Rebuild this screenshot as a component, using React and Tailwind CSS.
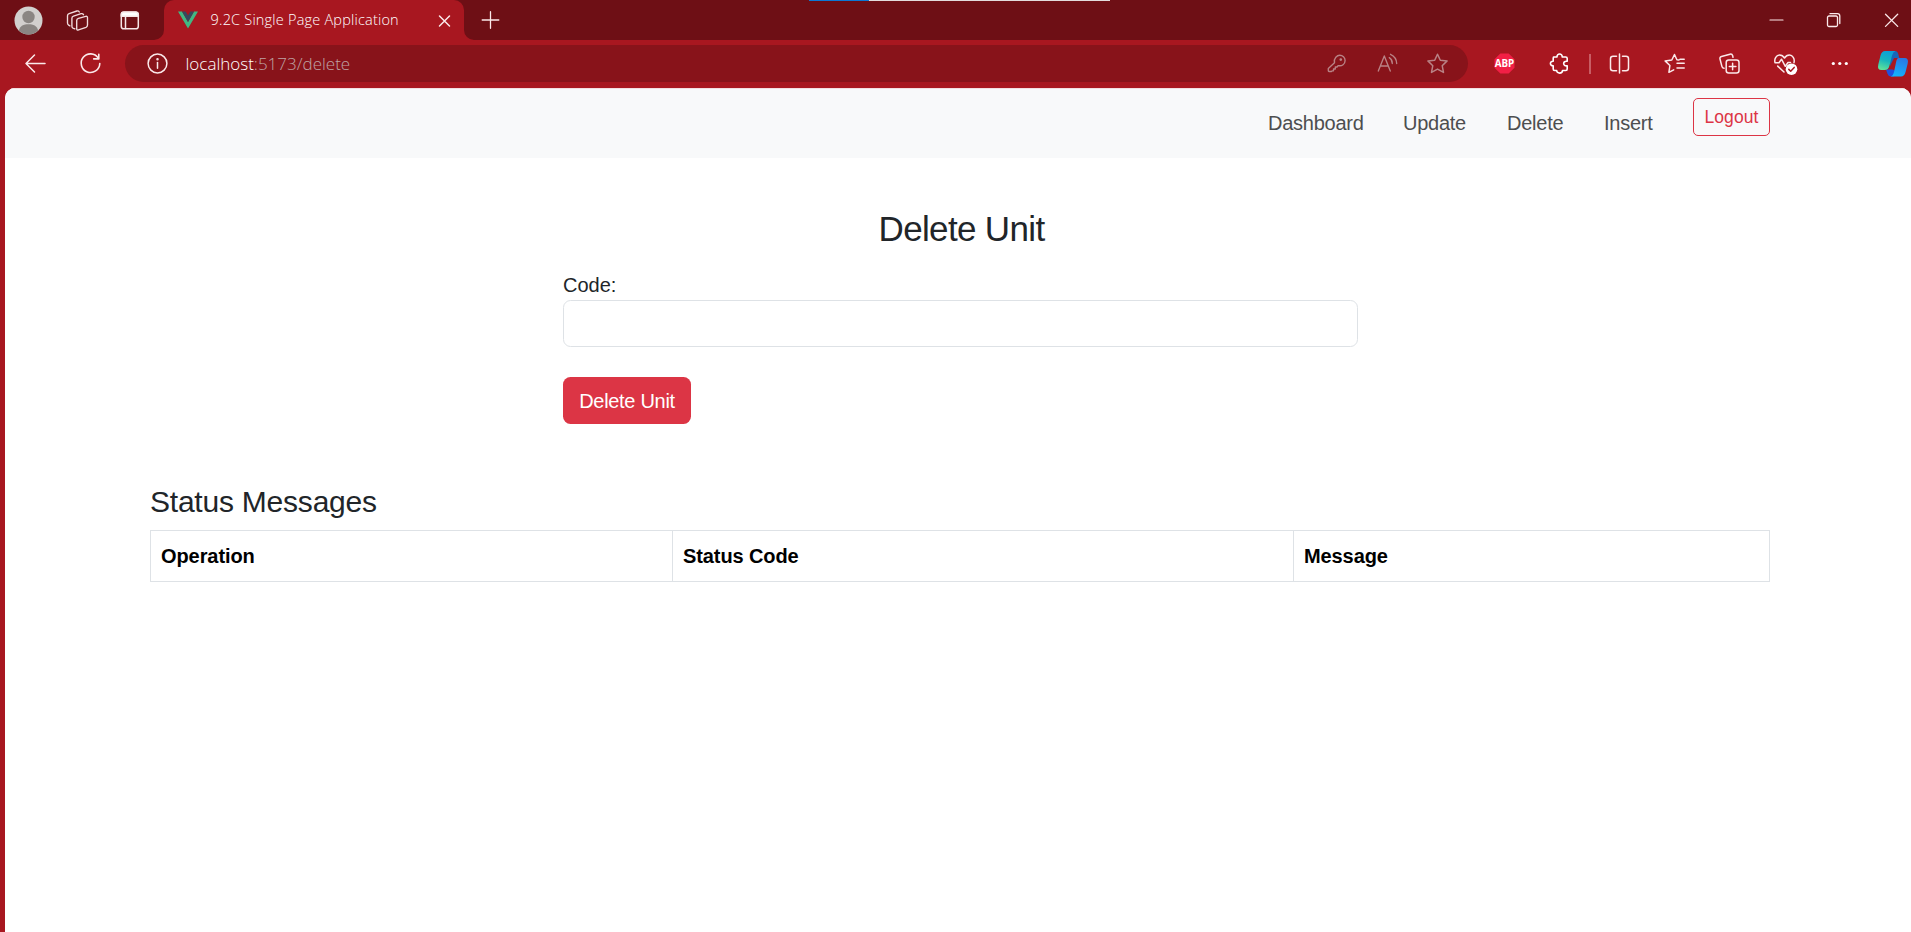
import React from "react";

// Icon canvas whose origin is its centre; one unit is one pixel.
function Icon({ children, className = "", color = "#fbe9ea", sw = 1.35 }) {
  return (
    <svg
      className={"h-[31px] w-[31px] shrink-0 " + className}
      viewBox="-15.5 -15.5 31 31"
      fill="none"
      stroke={color}
      strokeWidth={sw}
      strokeLinecap="round"
      strokeLinejoin="round"
    >
      {children}
    </svg>
  );
}

const star =
  "M0-9.3 2.8-3.3 9.6-2.6 4.7 2.2 6 8.9 0 5.6-6 8.9-4.7 2.2-9.6-2.6-2.8-3.3Z";

function TabStrip() {
  return (
    <div className="relative flex h-10 items-center bg-[#6e0f15]">
      <div className="absolute left-[809px] top-0 flex h-px w-[301px] bg-[#e3dcdc]">
        <div className="h-px w-[60px] bg-[#0c78d4]" />
      </div>
      <Icon className="ml-[12.5px]" color="none">
        <circle r="14" fill="#d2d0ce" />
        <circle cy="-3.5" r="6.2" fill="#8a8683" />
        <path d="M-9.7 10.1C-8.5 5.3-4.8 3.8 0 3.8S8.5 5.3 9.7 10.1A14 14 0 0 1-9.7 10.1Z" fill="#8a8683" />
      </Icon>
      <Icon className="ml-[18.5px]" color="#f2dcdd">
        <path d="M1-2.2Q-.8-1.6-.8 0V8.2Q-.8 10 1 9.4L8.5 6.8Q10 6.200 10 4.600V-2.800Q10-4.600 8.200-4.200Z" />
        <path d="M-2.600 8.300-4.600 7.600Q-5.600 7.200-5.600 5.800V-2.200Q-5.600-3.800-4-4.300L3.600-6.800Q5.200-7.200 6-5.800" />
        <path d="M-7.600 5.400-8.800 4.700Q-10 4-10 2.600V-4.800Q-10-6.400-8.400-6.900L-.6-9.500Q1-9.900 1.800-8.500" />
      </Icon>
      <Icon className="ml-[21px]" color="#f7e6e7" sw={1.5}>
        <rect x="-8.200" y="-8.200" width="17" height="16.500" rx="2.600" />
        <path d="M-8.200-4.200V-6A2.600 2.600 0 0 1-5.600-8.600H6.200A2.600 2.600 0 0 1 8.800-6V-4.200Z" fill="#fff" />
        <path d="M-4-4V8" />
      </Icon>
      <div className="relative ml-[18.500px] flex h-10 w-[300px] items-center rounded-t-[10px] bg-[#a81720]">
        <svg className="absolute -left-[10px] bottom-0 h-[10px] w-[10px]" viewBox="0 0 10 10">
          <path d="M10 0A10 10 0 0 1 0 10H10Z" fill="#a81720" />
        </svg>
        <svg className="absolute -right-[10px] bottom-0 h-[10px] w-[10px]" viewBox="0 0 10 10">
          <path d="M0 0A10 10 0 0 0 10 10H0Z" fill="#a81720" />
        </svg>
        <svg className="ml-[14px] h-[18px] w-[20px] shrink-0" viewBox="0 0 20 18">
          <path d="M0 .5H4L10 11 16 .5H20L10 17.500Z" fill="#41b883" />
          <path d="M4 .5H7.700L10 4.500 12.300 .5H16L10 11Z" fill="#35495e" />
        </svg>
        <span className="ml-[13px] w-[189px] whitespace-nowrap font-['Open_Sans',sans-serif] text-[14.500px] font-light leading-5 tracking-[0.200px] text-white">
          9.2C Single Page Application
        </span>
        <Icon className="ml-[29.500px] translate-y-[0.500px]" sw={1.5}>
          <path d="M-5-5 5 5M5-5-5 5" />
        </Icon>
      </div>
      <Icon className="ml-[11px] -translate-y-[0.500px]" sw={1.300}>
        <path d="M-8.300 0H8.300M0-8.300V8.300" />
      </Icon>
      <div className="ml-auto flex items-center">
        <Icon className="-translate-y-[0.500px]" sw={1.200}>
          <path d="M-6.500 0H6.500" />
        </Icon>
        <Icon className="ml-[26px]" sw={1.300}>
          <rect x="-6" y="-4.500" width="10" height="10.500" rx="1.500" />
          <path d="M-3.500-6.800H4Q6.300-6.800 6.300-4.500V3" />
        </Icon>
        <Icon className="ml-[27px] mr-[4.500px]" sw={1.300}>
          <path d="M-6-6.300 6.200 5.900M6.200-6.300-6 5.900" />
        </Icon>
      </div>
    </div>
  );
}

function Toolbar() {
  return (
    <div className="flex h-12 items-start bg-[#a81720] pt-[5px]">
      <div className="flex h-[37px] items-center">
        <Icon className="ml-[19.500px]" sw={1.500}>
          <path d="M-1-8.500-9.500 0-1 8.500M-9.500 0H9.500" />
        </Icon>
        <Icon className="ml-[24px]" sw={1.600}>
          <path d="M7.800-5.400A9.300 9.300 0 1 0 9.300 0M8.300-9.300V-4.600H3.200" />
        </Icon>
      </div>
      <div className="ml-[19px] flex h-[37px] w-[1343px] shrink-0 items-center rounded-full bg-[#88131a]">
        <Icon className="ml-[17px]" sw={1.500}>
          <circle r="9.400" />
          <path d="M0-1V4.800" />
          <circle cy="-4.200" r=".5" fill="#fff" />
        </Icon>
        <span className="ml-[13px] whitespace-nowrap font-['Open_Sans',sans-serif] text-[17px] font-light leading-6 text-[#bfa3a5]">
          <span className="text-white">localhost</span>:5173/delete
        </span>
        <div className="ml-auto mr-[15px] flex items-center gap-[19.500px]">
          <Icon color="#b98285">
            <path d="M-8.200 5-2-.8C-3-5.500 .8-8.300 3.200-8.300 6.200-8.300 8.600-6 8.600-3 8.600 .5 5.500 3 1.600 2.100L.5 3.500H-1.200V5.500H-3V7.300H-4.200L-5 8H-7.500Q-8.200 8-8.200 7.300Z" />
            <circle cx="4.300" cy="-4" r=".7" fill="#b98285" />
          </Icon>
          <Icon color="#b98285" className="translate-x-px">
            <path d="M-9.200 7.500-3.200-7.500 2.800 7.500M-7.200 2.500H.8" />
            <path d="M1.800-5.800Q4.800-4 4.800 0M3-9.200Q9-6.500 9.200 0" />
          </Icon>
          <Icon color="#b98285" sw={1.500}>
            <path d={star} />
          </Icon>
        </div>
      </div>
      <div className="ml-[9px] flex h-[37px] items-center">
        <div className="flex w-[55px] justify-center">
          <Icon color="none">
            <path d="M-4.200-10H4.200L10-4.200V4.200L4.200 10H-4.200L-10 4.200V-4.200Z" fill="#f21f45" />
            <text y="3.600" textAnchor="middle" fontSize="9.800" fontWeight="700" fontFamily="Open Sans, sans-serif" fill="#fff">
              ABP
            </text>
          </Icon>
        </div>
        <div className="flex w-[55px] justify-center">
          <Icon color="#fff" sw={1.600}>
            <path d="M-6-6.500H-2.500C-2.800-10.500 3-10.500 2.700-6.500H6.200Q7.700-6.500 7.700-5V-2.200C3-3 3 3 7.700 2.300V5.500Q7.700 7 6.200 7H3C3 10.500-2.800 10.500-2.800 7H-4.800Q-6.300 7-6.300 5.500V2.300C-10 2.500-10-2.500-6.300-2.200V-5Z" />
          </Icon>
        </div>
        <div className="flex w-[5px] justify-end pr-px">
          <div className="h-5 w-[2px] bg-[#c85d64]" />
        </div>
        <div className="flex w-[55px] justify-center">
          <Icon sw={1.500}>
            <path d="M0-9.500V9.500M-3-7.300H-6.500Q-9-7.300-9-4.800V4.800Q-9 7.300-6.500 7.300H-3M3-7.300H6.500Q9-7.300 9-4.800V4.800Q9 7.300 6.500 7.300H3" />
          </Icon>
        </div>
        <div className="flex w-[55px] justify-center">
          <Icon sw={1.500}>
            <path d="M4.500-3.500 2.400-3.800 0-9 -2.700-3.500-9.400-2.600-4.600 2-5.600 8.800-.8 6.400M2.500-.2H9.700M2.500 4.500H9.700M5.500-4.200H9.700" />
          </Icon>
        </div>
        <div className="flex w-[55px] justify-center">
          <Icon sw={1.500}>
            <rect x="-3.300" y="-3.500" width="12.800" height="13" rx="2.500" />
            <path d="M3.100-.3V6.300M-.2 3H6.400M-5.500 4.800Q-7.200 4.500-7.600 2.900L-9.500-4.500Q-9.900-6.500-8-7L.5-9.300Q2.500-9.800 3.200-7.800L3.500-6.200" />
          </Icon>
        </div>
        <div className="flex w-[55px] justify-center">
          <Icon sw={1.500}>
            <path d="M-9.500-.8C-10.500-5-8-8.500-5-8.500-2.800-8.500-1.200-7.500 0-5.500 1.200-7.500 2.800-8.500 5-8.500 8-8.500 10.500-5 9.500-.8M-9.500-.8H-5.500L-3-4.300 .8 2.800 3.500-1H6M-6.800 2.600-.5 8.500" />
            <circle cx="7" cy="5.700" r="5.800" fill="#fff" stroke="none" />
            <path d="M4.300 5.900 6.200 7.800 9.700 3.900" stroke="#a81720" />
          </Icon>
        </div>
        <div className="flex w-[55px] justify-center">
          <Icon color="none">
            <circle cx="-6.200" r="1.600" fill="#fff" />
            <circle cx=".3" r="1.600" fill="#fff" />
            <circle cx="6.800" r="1.600" fill="#fff" />
          </Icon>
        </div>
        <div className="flex w-[44px] justify-start pl-[10px]">
          <svg className="h-[28px] w-[32px] shrink-0" viewBox="0 0 32 28">
            <defs>
              <linearGradient id="cpA" x1=".6" y1="0" x2=".3" y2="1">
                <stop offset="0" stopColor="#0b9fd8" />
                <stop offset=".5" stopColor="#17b5bd" />
                <stop offset="1" stopColor="#5fe39a" />
              </linearGradient>
              <linearGradient id="cpB" x1=".6" y1="0" x2=".3" y2="1">
                <stop offset="0" stopColor="#2a78e4" />
                <stop offset="1" stopColor="#12b4ff" />
              </linearGradient>
            </defs>
            <path d="M13 1H18Q20.500 1 21.300 4L22.300 8H17L13 16Z" fill="#1767b8" />
            <path d="M9 19.500H15.500L19 21 17 26.500H14Q11.500 26.500 10.600 24Z" fill="#2050e0" />
            <path d="M8 1H18.500Q16 1.800 15 5.500L12.500 15.500Q11.500 20 7.500 20H4.500Q0 20 1.300 14.500L3.500 5.500Q4.700 1 8 1Z" fill="url(#cpA)" />
            <path d="M21.500 8H27.500Q32 8 30.700 13.500L28.700 21.500Q27.500 26.500 24 26.500H13.500Q16 26 17 22L19 12.500Q19.800 8 21.500 8Z" fill="url(#cpB)" />
          </svg>
        </div>
      </div>
    </div>
  );
}

function Navbar() {
  const link = "whitespace-nowrap text-xl leading-[30px] tracking-[-0.25px] text-[#4d4e4f]";
  return (
    <nav className="flex h-[70px] items-start border-t border-[#f3dfe1] bg-[#f8f9fa]">
      <div className="flex w-[1765px] justify-end pt-[9px]">
        <div className="flex items-start pt-[10px]">
          <a className={link + " w-[135px]"}>Dashboard</a>
          <a className={link + " w-[104px]"}>Update</a>
          <a className={link + " w-[97px]"}>Delete</a>
          <a className={link + " w-[89px]"}>Insert</a>
        </div>
        <button className="h-[38px] w-[77px] rounded-[5px] border border-[#dc3545] pb-px text-[17.500px] leading-[26px] tracking-[0.100px] text-[#dc3545]">
          Logout
        </button>
      </div>
    </nav>
  );
}

function DeleteForm() {
  return (
    <section className="ml-[558px] w-[795px]">
      <h3 className="mt-[50px] pl-[2px] text-center text-[35px] leading-[42px] tracking-[-0.650px]">Delete Unit</h3>
      <label className="mt-[20px] block text-xl leading-[30px]">Code:</label>
      <input className="block h-[47px] w-full rounded-[7.500px] border border-[#dee2e6] bg-white px-[15px]" />
      <button className="mt-[30px] block h-[47px] w-[128px] whitespace-nowrap rounded-[7.500px] bg-[#dc3545] text-xl leading-[30px] tracking-[-0.300px] text-white">
        Delete Unit
      </button>
    </section>
  );
}

function StatusTable() {
  const cell = "h-[51px] border border-[#dee2e6] px-[10px] text-left font-bold leading-[30px]";
  return (
    <section className="ml-[145px] w-[1620px]">
      <h4 className="mt-[60px] text-[30px] leading-9 tracking-[-0.220px]">Status Messages</h4>
      <table className="mt-[10px] w-full table-fixed border-collapse text-xl text-black">
        <thead>
          <tr>
            <th className={cell + " w-[522px] tracking-[-0.080px]"}>Operation</th>
            <th className={cell + " w-[621px] tracking-[-0.100px]"}>Status Code</th>
            <th className={cell + " tracking-[-0.100px]"}>Message</th>
          </tr>
        </thead>
      </table>
    </section>
  );
}

export default function App() {
  return (
    <div className="flex h-[932px] w-[1911px] flex-col overflow-hidden bg-[#a81720]">
      <TabStrip />
      <Toolbar />
      <main className="ml-[5px] flex-1 overflow-hidden rounded-t-[10px] bg-white font-['Liberation_Sans',Arial,sans-serif] text-[#212529]">
        <Navbar />
        <DeleteForm />
        <StatusTable />
      </main>
    </div>
  );
}
